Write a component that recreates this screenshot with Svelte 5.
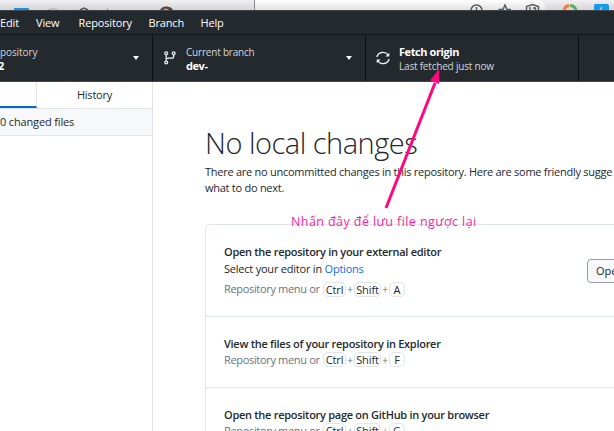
<script>
  const menus = [
    { label: 'Edit', width: 36 },
    { label: 'View', width: 42.5 },
    { label: 'Repository', width: 70 },
    { label: 'Branch', width: 52 },
    { label: 'Help', width: 40 }
  ];
  const cards = [
    { title: 'Open the repository in your external editor', key: 'A', editor: true },
    { title: 'View the files of your repository in Explorer', key: 'F' },
    { title: 'Open the repository page on GitHub in your browser', key: 'G' }
  ];
</script>

<div class="window">
  <div class="browser">
    <svg width="614" height="10" viewBox="0 0 614 10">
      <defs>
        <linearGradient id="shade" x1="0" y1="0" x2="0" y2="1">
          <stop offset="0" stop-color="#f0eff3" />
          <stop offset="1" stop-color="#d5d5d8" />
        </linearGradient>
        <linearGradient id="bar" x1="0" y1="0" x2="0" y2="1">
          <stop offset="0" stop-color="#ffffff" />
          <stop offset="1" stop-color="#e2e2e2" />
        </linearGradient>
      </defs>
      <rect width="614" height="10" fill="url(#shade)" />
      <path d="M255 0H539Q546 2 546 10H255Z" fill="url(#bar)" />
      <path d="M254.5 0V10" stroke="#8b8b8b" />
      <rect x="14" y="8" width="15" height="4" rx="1" fill="#1b92e0" />
      <path d="M48 10Q53 7 58 10" stroke="#aaa" fill="none" />
      <path d="M80 10L84 8L88 10" stroke="#555" fill="none" stroke-width="1.5" />
      <path d="M107.500 8V10" stroke="#999" />
      <path d="M160 10Q162 6 167 6.500Q172 7 173 10Z" fill="#5b4040" />
      <path d="M163 10Q166 7 169 10Z" fill="#d49b8c" />
      <circle cx="476.500" cy="10.500" r="5.500" fill="none" stroke="#555b60" stroke-width="1.500" />
      <path d="M476.500 7V10" stroke="#555b60" stroke-width="1.500" />
      <path d="M498.500 9.500H503L505 5L507 9.500H511" fill="none" stroke="#555b60" stroke-width="1.500" />
      <path d="M526.500 10V6.500L532.500 4.500L538.500 6.500V10M530 7V10M533 8H535.500V10" fill="none" stroke="#555b60" stroke-width="1.400" />
      <path d="M564 10Q565 6 569 5.500" fill="none" stroke="#f5793b" stroke-width="3" />
      <path d="M570 5.500Q575 6 576 10" fill="none" stroke="#59ae61" stroke-width="3" />
      <rect x="594" y="4" width="15" height="7" rx="1.500" fill="#179be9" />
      <path d="M602 7L600 10" stroke="#8fd3fa" stroke-width="1.500" />
    </svg>
  </div>
  <nav class="menu">
    {#each menus as menu}
      <span style:width="{menu.width}px">{menu.label}</span>
    {/each}
  </nav>
  <header class="toolbar">
    <div class="tool repo">
      <div class="copy"><span class="caption">pository</span><b>2</b></div>
      <i class="caret"></i>
    </div>
    <div class="tool branch">
      <svg width="12" height="14" viewBox="0 0 12 14" fill="none" stroke="#eef1f3" stroke-width="1.250">
        <circle cx="2.200" cy="2.300" r="1.450" /><circle cx="2.200" cy="11.500" r="1.450" /><circle cx="9.700" cy="2.300" r="1.450" />
        <path d="M2.200 3.800V10M9.700 3.800V5.200Q9.700 7.200 7.700 7.200H4.200Q2.200 7.200 2.200 9" />
      </svg>
      <div class="copy"><span class="caption">Current branch</span><b>dev-</b></div>
      <i class="caret"></i>
    </div>
    <div class="tool fetch">
      <svg width="14" height="14" viewBox="0 0 14 14" fill="none" stroke="#eef1f3" stroke-width="1.350">
        <path d="M.9 6A6.200 5.800 0 0 1 12 3.800M13.100 8A6.200 5.800 0 0 1 2 10.200" />
        <path d="M13.300 1.700V5.500H9.500ZM.7 12.300V8.500H4.500Z" fill="#eef1f3" stroke="none" />
      </svg>
      <div class="copy"><b>Fetch origin</b><span class="caption">Last fetched just now</span></div>
    </div>
    <div class="rest"></div>
  </header>
  <div class="content">
    <aside>
      <div class="tabs"><div class="active"></div><div class="history">History</div></div>
      <div class="changed">0 changed files</div>
    </aside>
    <main>
      <h1>No local changes</h1>
      <p class="intro">There are no uncommitted changes in this repository. Here are some friendly sugge<br />what to do next.</p>
      <div class="cards">
        {#each cards as card}
          <section class:editor={card.editor}>
            <div>
              <h2>{card.title}</h2>
              {#if card.editor}<p class="select">Select your editor in <a href="#options">Options</a></p>{/if}
              <p class="shortcut"><span>Repository menu or</span><kbd class="ctrl">Ctrl</kbd><em>+</em><kbd class="shift">Shift</kbd><em>+</em><kbd class="letter">{card.key}</kbd></p>
            </div>
            {#if card.editor}<button>Ope</button>{/if}
          </section>
        {/each}
      </div>
    </main>
  </div>
  <svg class="arrow" width="614" height="431" viewBox="0 0 614 431">
    <path d="M386 208L435 83" stroke="#ff087f" stroke-width="3" />
    <path d="M439 69L430 80.500L439 84Z" fill="#ff087f" />
  </svg>
  <div class="note">Nhấn đây để lưu file ngược lại</div>
</div>

<style>
  :global(body) { margin: 0; overflow: hidden; }
  * { box-sizing: border-box; }
  .window { position: relative; width: 614px; height: 431px; overflow: hidden; display: flex; flex-direction: column; background: #fff; color: #24292e; font: 11px/16px "Open Sans", "Noto Sans", sans-serif; letter-spacing: -.22px; white-space: nowrap; }
  .browser { height: 10px; flex: none; }
  .browser svg { display: block; }
  .menu { height: 25px; flex: none; display: flex; align-items: center; background: #24292e; border-top: 1px solid #404549; border-bottom: 1px solid #15191c; color: #fff; letter-spacing: -.15px; }
  .menu span { flex: none; }
  .toolbar { height: 47px; flex: none; display: flex; background: #24292e; border-bottom: 1px solid #42474b; color: #fff; }
  .tool { display: flex; flex: none; align-items: center; border-right: 1px solid #0d1012; }
  .repo { width: 153px; justify-content: space-between; padding-right: 13px; }
  .repo .caption { letter-spacing: -.1px; }
  .repo b { margin-left: -2px; }
  .branch { width: 213px; padding: 0 13px 0 11px; }
  .branch .copy { margin-left: 10px; }
  .branch .caret { margin-left: auto; }
  .fetch { width: 213px; padding-left: 10px; }
  .fetch .copy { margin-left: 9px; }
  .copy { display: flex; flex-direction: column; line-height: 14px; font-size: 11px; padding-top: 1px; }
  .copy b { letter-spacing: -.42px; }
  .caption { color: #d1d5da; font-size: 10px; letter-spacing: -.2px; }
  .caret { border: 3.500px solid transparent; border-top: 4px solid #fff; border-bottom: 0; }
  .content { flex: 1; display: flex; min-height: 0; }
  aside { width: 153px; flex: none; border-right: 1px solid #e1e4e8; }
  .tabs { height: 27px; display: flex; border-bottom: 1px solid #e1e4e8; }
  .active { width: 37px; border-right: 1px solid #e1e4e8; border-bottom: 2px solid #0366d6; }
  .history { flex: 1; display: flex; align-items: center; justify-content: center; }
  .changed { height: 27px; display: flex; align-items: center; background: #f6f8fa; border-bottom: 1px solid #e1e4e8; letter-spacing: -.15px; }
  main { width: 461px; flex: none; padding: 42px 0 0 52px; }
  h1 { margin: 0; font-size: 29px; font-weight: 300; line-height: 38px; letter-spacing: -.5px; }
  .intro { margin: 2px 0 0; letter-spacing: -.262px; }
  .cards { width: 520px; margin-top: 28px; border: 1px solid #e1e4e8; border-radius: 5px; }
  section { height: 71px; display: flex; align-items: center; padding: 0 18px 2px; border-bottom: 1px solid #e1e4e8; }
  section.editor { height: 92px; padding-bottom: 0; }
  h2 { margin: 0; font-size: 11px; line-height: 17px; font-weight: 600; letter-spacing: -.28px; }
  .editor h2 { margin-top: -1px; line-height: 18px; }
  p { margin: 0; }
  .select { line-height: 16px; }
  .editor .shortcut { margin-top: 4px; }
  a { color: #0f6df0; text-decoration: none; }
  .shortcut { display: flex; color: #6a737d; height: 16px; align-items: center; }
  .shortcut > span { width: 99px; flex: none; letter-spacing: -.33px; }
  kbd { height: 15px; flex: none; border: 1px solid #e1e4e8; border-radius: 5px; color: #24292e; font: inherit; line-height: 13px; text-align: center; letter-spacing: -.1px; }
  .ctrl { width: 23px; }
  .shift { width: 27px; }
  .letter { width: 16px; }
  em { width: 8px; flex: none; font-style: normal; font-size: 10px; text-align: center; }
  button { height: 24px; width: 119px; margin-left: auto; padding: 0 8px; border: 1px solid #959da5; border-radius: 4px; background: #f6f8fa; color: #24292e; font: inherit; text-align: left; }
  .arrow { position: absolute; left: 0; top: 0; }
  .note { position: absolute; left: 291px; top: 213px; color: #ff1a9b; font-size: 12.500px; line-height: 17px; letter-spacing: .42px; }
</style>
